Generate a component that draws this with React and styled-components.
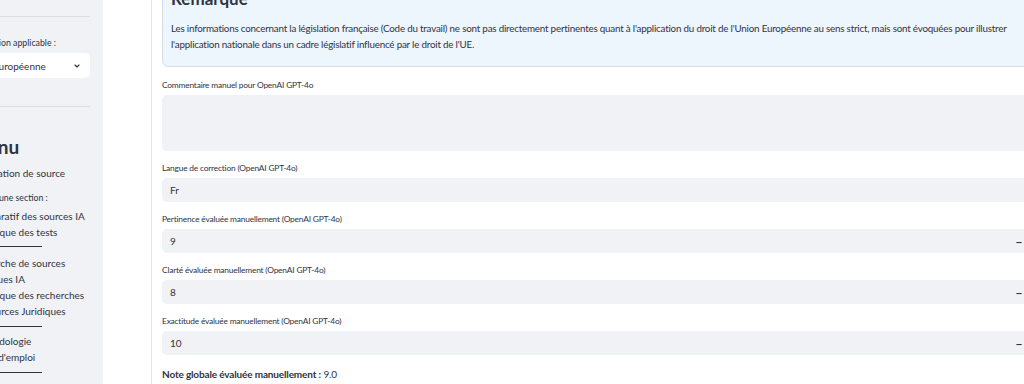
import React from "react";
import styled, { createGlobalStyle } from "styled-components";

const GlobalStyle = createGlobalStyle`
  html, body {
    margin: 0;
    padding: 0;
    background: #ffffff;
    overflow: hidden;
  }
  body {
    font-family: Lato, "Noto Sans", sans-serif;
    color: #31333f;
  }
`;

const Page = styled.div`
  display: flex;
  width: 1024px;
  height: 384px;
  overflow: hidden;
`;

/* sidebar, cut on its left side */
const Sidebar = styled.aside`
  flex: 0 0 103px;
  background: #f0f2f6;
  overflow: hidden;
`;

const SidebarInner = styled.div`
  width: 120px;
  margin-left: -30px;
  display: flex;
  flex-direction: column;
`;

const Divider = styled.hr`
  border: none;
  border-top: 1px solid #dcdee4;
  margin: ${p => p.$m || "0"};
`;

const ShortRule = styled.div`
  width: 72px;
  border-top: 1px solid #31333f;
  margin: ${p => p.$m || "6px 0"};
`;

const SideLabel = styled.div`
  font-size: 8.75px;
  line-height: 12px;
  margin: ${p => p.$m || "0"};
`;

const Select = styled.div`
  height: 25px;
  background: #ffffff;
  border-radius: 5px;
  display: flex;
  align-items: center;
  justify-content: space-between;
  padding: 0 9px 0 2px;
  margin: 4px 0 0 -8px;
  font-size: 10px;
`;

const MenuTitle = styled.div`
  font-size: 19px;
  font-weight: 700;
  line-height: 24px;
  margin-top: 28px;
`;

const NavItem = styled.div`
  font-size: 10px;
  line-height: 16px;
  margin-top: ${p => p.$mt || 0}px;
`;

const Main = styled.main`
  flex: 1;
  overflow: hidden;
  padding-left: 48px;
`;

const Card = styled.section`
  width: 887px;
  margin-top: -21px;
  border: 1px solid #e3e4e8;
  border-radius: 8px;
  padding: 0 10px;
  height: 440px;
`;

const InfoBox = styled.div`
  background: #edf5fd;
  border: 1px solid #d6dde6;
  border-radius: 6px;
  padding: 6px 10px 14px 8px;
`;

const InfoTitle = styled.h3`
  margin: 0 0 9px;
  font-size: 17px;
  line-height: 24px;
  font-weight: 700;
`;

const InfoText = styled.p`
  margin: 0;
  font-size: 9.8px;
  letter-spacing: -0.2px;
  line-height: 16px;
`;

const Field = styled.div`
  margin-top: ${p => p.$first ? 12 : 11}px;
`;

const Label = styled.div`
  font-size: 8.4px;
  letter-spacing: -0.2px;
  line-height: 12px;
  margin-bottom: 4px;
`;

const InputBox = styled.div`
  height: ${p => p.$tall ? 56 : 24}px;
  background: #f0f2f6;
  border-radius: 5px;
  display: flex;
  align-items: center;
  padding-left: 8px;
  font-size: 10px;
`;

const Value = styled.span`
  flex: 1;
`;

const StepButton = styled.span`
  width: 20px;
  display: flex;
  justify-content: center;
  align-items: center;
  font-weight: 700;
  font-size: 12px;
`;

const Total = styled.div`
  margin-top: 12px;
  font-size: 10px;
  letter-spacing: -0.15px;
  line-height: 14px;
  & b {
    font-weight: 700;
  }
`;

const Chevron = () => (
  <svg width="8" height="8" viewBox="0 0 24 24" fill="none" stroke="#31333f" strokeWidth="3.5" strokeLinecap="round" strokeLinejoin="round">
    <polyline points="6 9 12 15 18 9" />
  </svg>
);

const NumberField = ({ label, value }) => (
  <Field>
    <Label>{label}</Label>
    <InputBox>
      <Value>{value}</Value>
      <StepButton>−</StepButton>
      <StepButton>+</StepButton>
    </InputBox>
  </Field>
);

const App = () => {
  return (
    <>
      <GlobalStyle />
      <Page>
        <Sidebar>
          <SidebarInner>
            <Divider $m="16px 0 0" />
            <SideLabel $m="20px 0 0">Législation applicable :</SideLabel>
            <Select>
              <span>Union Européenne</span>
              <Chevron />
            </Select>
            <Divider $m="28px 0 0" />
            <MenuTitle>Menu</MenuTitle>
            <NavItem $mt={6}>Vérification de source</NavItem>
            <SideLabel $m="11px 0 4px">Choisir une section :</SideLabel>
            <NavItem>Comparatif des sources IA</NavItem>
            <NavItem>Historique des tests</NavItem>
            <ShortRule $m="6px 0 8px" />
            <NavItem>Recherche de sources</NavItem>
            <NavItem>juridiques IA</NavItem>
            <NavItem>Historique des recherches</NavItem>
            <NavItem>Ressources Juridiques</NavItem>
            <ShortRule $m="7px 0 6px" />
            <NavItem>Méthodologie</NavItem>
            <NavItem>Mode d'emploi</NavItem>
            <ShortRule $m="7px 0 6px" />
          </SidebarInner>
        </Sidebar>
        <Main>
          <Card>
            <InfoBox>
              <InfoTitle>Remarque</InfoTitle>
              <InfoText>
                Les informations concernant la législation française (Code du travail) ne sont pas directement pertinentes quant à l'application du droit de l'Union Européenne au sens strict, mais sont évoquées pour illustrer l'application nationale dans un cadre législatif influencé par le droit de l'UE.
              </InfoText>
            </InfoBox>
            <Field $first>
              <Label>Commentaire manuel pour OpenAI GPT-4o</Label>
              <InputBox $tall />
            </Field>
            <Field>
              <Label>Langue de correction (OpenAI GPT-4o)</Label>
              <InputBox>Fr</InputBox>
            </Field>
            <NumberField label="Pertinence évaluée manuellement (OpenAI GPT-4o)" value="9" />
            <NumberField label="Clarté évaluée manuellement (OpenAI GPT-4o)" value="8" />
            <NumberField label="Exactitude évaluée manuellement (OpenAI GPT-4o)" value="10" />
            <Total>
              <b>Note globale évaluée manuellement :</b> 9.0
            </Total>
          </Card>
        </Main>
      </Page>
    </>
  );
};

export default App;
